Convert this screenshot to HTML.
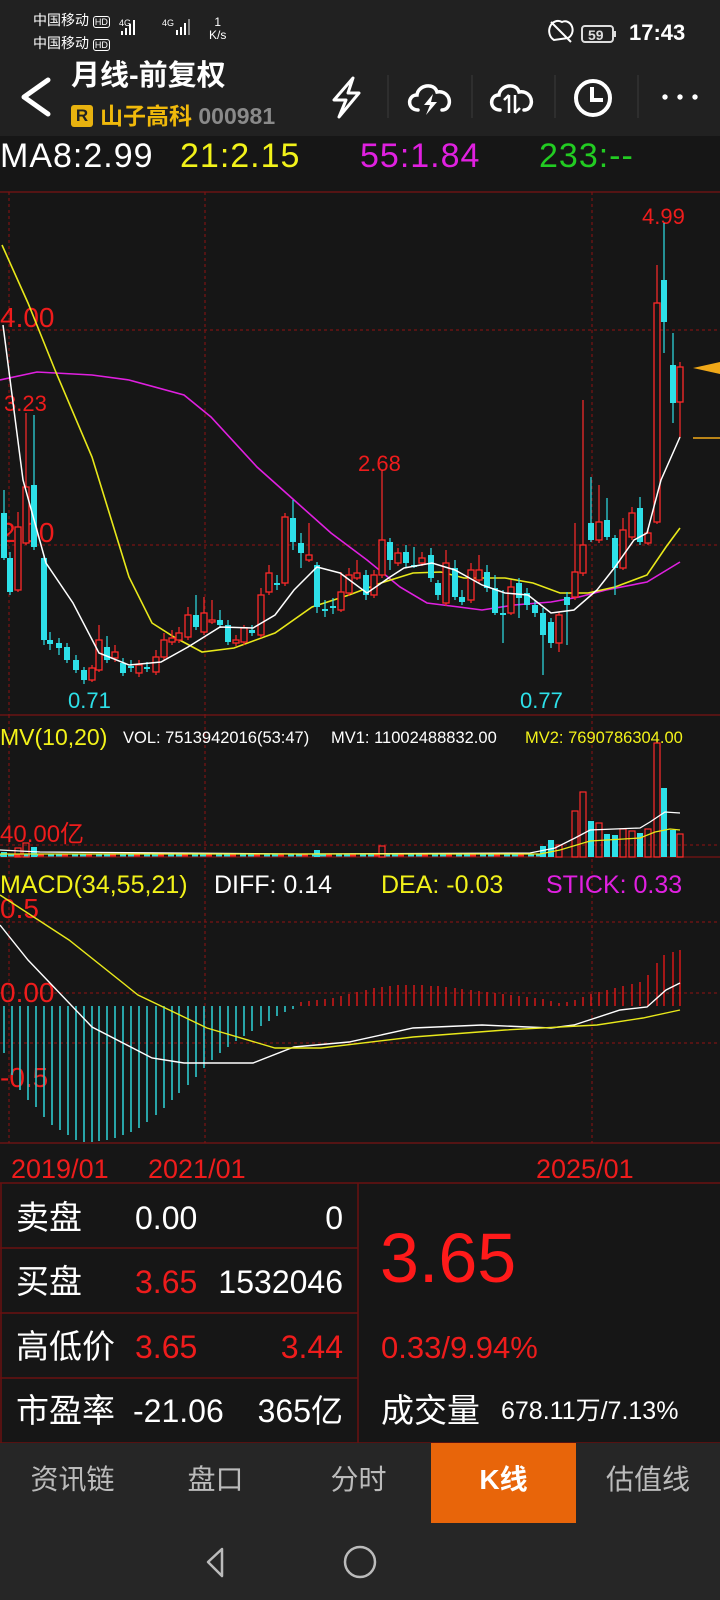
<!DOCTYPE html>
<html><head><meta charset="utf-8"><style>
*{margin:0;padding:0;box-sizing:border-box}
body{width:720px;height:1600px;background:#161616;position:relative;overflow:hidden;font-family:"Liberation Sans","Noto Sans CJK SC",sans-serif;color:#fff}
.a{position:absolute;white-space:nowrap}
</style></head><body>
<div class="a" style="left:0;top:0;width:720px;height:136px;background:#212121"></div>
<div class="a" style="left:33px;top:12px;font-size:14px;line-height:17px">中国移动 <span style="font-size:9px;border:1px solid #fff;border-radius:3px;padding:0 1px">HD</span></div>
<div class="a" style="left:33px;top:35px;font-size:14px;line-height:17px">中国移动 <span style="font-size:9px;border:1px solid #fff;border-radius:3px;padding:0 1px">HD</span></div>
<div class="a" style="left:209px;top:16px;font-size:12px;line-height:13px;text-align:center">1<br>K/s</div>
<div class="a" style="left:629px;top:20px;font-size:22px;font-weight:bold">17:43</div>
<div class="a" style="left:71px;top:58px;font-size:29px;font-weight:bold;line-height:36px">月线-前复权</div>
<div class="a" style="left:71px;top:105px;width:22px;height:22px;background:#e8b20f;border-radius:3px;color:#222;font-size:17px;font-weight:bold;text-align:center;line-height:22px">R</div>
<div class="a" style="left:100px;top:102px;font-size:23px;font-weight:bold;color:#f0b90b;line-height:28px">山子高科 <span style="color:#8a8a8a">000981</span></div>
<div class="a" style="left:0;top:136px;font-size:34px;line-height:40px;letter-spacing:1px">MA8:2.99</div>
<div class="a" style="left:180px;top:136px;font-size:34px;line-height:40px;letter-spacing:1px;color:#f2f21a">21:2.15</div>
<div class="a" style="left:360px;top:136px;font-size:34px;line-height:40px;letter-spacing:1px;color:#e020e0">55:1.84</div>
<div class="a" style="left:539px;top:136px;font-size:34px;line-height:40px;letter-spacing:1px;color:#22cc22">233:--</div>

<svg class="a" style="left:0;top:0" width="720" height="1600" viewBox="0 0 720 1600" font-family="Liberation Sans, sans-serif">
<g fill="#fff"><rect x="121" y="31" width="2" height="4"/><rect x="125" y="28" width="2" height="7"/><rect x="129" y="24" width="2" height="11"/><rect x="133" y="20" width="2" height="15"/>
<rect x="176" y="30" width="2" height="5"/><rect x="180" y="27" width="2" height="8"/><rect x="184" y="23" width="2" height="12"/><rect x="188" y="19" width="2" height="16" fill="#888"/></g>
<text x="119" y="26" font-size="9" fill="#fff">4G</text><text x="162" y="26" font-size="9" fill="#fff">4G</text>
<path d="M554 40 A7 8 0 0 1 562 22 A7 8 0 0 1 568 38 Z M551 22 L571 42" stroke="#fff" stroke-width="2" fill="none"/>
<rect x="582" y="26" width="31" height="16" rx="3" fill="none" stroke="#ddd" stroke-width="2"/><rect x="614" y="31" width="2" height="6" fill="#ddd"/>
<text x="588" y="40" font-size="14" font-weight="bold" fill="#ddd">59</text>
<polyline points="48,80 24,97 48,114" stroke="#fff" stroke-width="5" fill="none" stroke-linecap="round" stroke-linejoin="round"/>
<path d="M353 78 L334 100 L346 100 L339 117 L359 93 L348 93 Z" stroke="#fff" stroke-width="3" fill="none" stroke-linejoin="round"/>
<path d="M418 110 C407 110 407 95 417 95 C418 85 434 82 437 92 C447 90 453 101 447 108 C446 109 444 110 442 110" stroke="#fff" stroke-width="3.5" fill="none" stroke-linecap="round"/>
<path d="M433 94 L424 105 H430 L426 115 L437 102 H431 Z" fill="#fff"/>
<path d="M500 110 C489 110 489 95 499 95 C500 85 516 82 519 92 C529 90 535 101 529 108 C528 109 526 110 524 110" stroke="#fff" stroke-width="3.5" fill="none" stroke-linecap="round"/>
<path d="M509 95 V113 M504 100 L509 95 M515 113 V95 M520 108 L515 113" stroke="#fff" stroke-width="2.5" fill="none"/>
<circle cx="593" cy="98" r="17" stroke="#fff" stroke-width="4" fill="none"/><path d="M592 87 V100 H603" stroke="#fff" stroke-width="4" fill="none"/>
<g fill="#fff"><circle cx="665" cy="97" r="2.7"/><circle cx="680" cy="97" r="2.7"/><circle cx="695" cy="97" r="2.7"/></g>
<g stroke="#3a3a3a" stroke-width="1"><path d="M388 75V118M472 75V118M555 75V118M638 75V118"/></g>

<g stroke="#7a1414" stroke-width="1.2" fill="none">
<path d="M0 192H720M0 715H720M0 857H720M0 1143H720"/>
<path stroke-dasharray="3 3" d="M0 330H720M0 545H720M0 845H720M0 922H720M0 993H720M0 1043H720M9 192V715M205 192V715M592 192V715M9 715V1143M205 715V1143M592 715V1143"/>
</g>
<g fill="#ee1c1c" font-size="28"><text x="0" y="327">4.00</text><text x="0" y="542">2.00</text></g>
<g fill="#ee1c1c" font-size="22"><text x="4" y="411">3.23</text><text x="358" y="471">2.68</text><text x="642" y="224">4.99</text></g>
<g fill="#2de0e8" font-size="22"><text x="68" y="708">0.71</text><text x="520" y="708">0.77</text></g>
<g fill="none" stroke-width="1.6">
<path stroke="#e020e0" d="M0 380 L37 372 L92 375 L129 380 L184 395 L211 417 L257 467 L294 500 L331 533 L367 560 L400 587 L427 603 L459 607 L482 610 L514 605 L551 602 L579 597 L606 590 L647 582 L680 562"/>
<path stroke="#e8e81a" d="M2 245 L28 303 L55 370 L92 457 L129 577 L152 623 L174 637 L202 652 L234 648 L275 633 L312 607 L349 595 L381 583 L413 573 L441 572 L464 578 L505 578 L533 583 L560 593 L588 593 L615 587 L647 575 L666 547 L680 528"/>
</g>
<path stroke="#ff2a2a" stroke-width="1.2" fill="none" d="M18 512V527M18 590V592M26 413V487M26 543V545M92 665V668M92 680V682M99 625V640M99 670V672M115 645V652M115 658V662M139 660V665M139 673V677M156 650V657M156 672V675M164 633V640M164 657V660M172 630V638M172 642V645M179 627V633M179 640V643M188 607V615M188 637V640M204 597V613M204 632V635M212 600V620M212 622V624M236 635V640M236 643V646M244 625V628M244 642V645M261 588V595M261 635V638M269 565V573M269 592V595M285 513V517M285 583V586M309 523V555M309 560V562M341 572V592M341 610V612M349 568V575M349 593V596M357 560V573M357 578V580M374 570V575M374 595V598M382 470V540M382 575V578M398 548V553M398 563V566M422 552V558M422 563V566M446 550V563M446 603V606M471 563V570M471 600V603M479 555V570M479 580V583M511 580V587M511 613V615M559 612V615M559 643V652M575 523V572M575 597V600M583 400V545M583 573V576M599 485V522M599 540V543M623 518V530M623 568V570M632 507V513M632 537V540M648 528V533M648 543V545M657 265V303M657 522V524M680 362V367M680 402V437"/>
<g stroke="#ff2a2a" stroke-width="1.3" fill="#161616">
<rect x="15" y="527" width="6" height="63"/><rect x="23" y="487" width="6" height="56"/><rect x="89" y="668" width="6" height="12"/><rect x="96" y="640" width="6" height="30"/><rect x="112" y="652" width="6" height="6"/><rect x="136" y="665" width="6" height="8"/><rect x="153" y="657" width="6" height="15"/><rect x="161" y="640" width="6" height="17"/><rect x="169" y="638" width="6" height="4"/><rect x="176" y="633" width="6" height="7"/><rect x="185" y="615" width="6" height="22"/><rect x="201" y="613" width="6" height="19"/><rect x="209" y="620" width="6" height="2"/><rect x="233" y="640" width="6" height="3"/><rect x="241" y="628" width="6" height="14"/><rect x="258" y="595" width="6" height="40"/><rect x="266" y="573" width="6" height="19"/><rect x="282" y="517" width="6" height="66"/><rect x="306" y="555" width="6" height="5"/><rect x="338" y="592" width="6" height="18"/><rect x="346" y="575" width="6" height="18"/><rect x="354" y="573" width="6" height="5"/><rect x="371" y="575" width="6" height="20"/><rect x="379" y="540" width="6" height="35"/><rect x="395" y="553" width="6" height="10"/><rect x="419" y="558" width="6" height="5"/><rect x="443" y="563" width="6" height="40"/><rect x="468" y="570" width="6" height="30"/><rect x="476" y="570" width="6" height="10"/><rect x="508" y="587" width="6" height="26"/><rect x="556" y="615" width="6" height="28"/><rect x="572" y="572" width="6" height="25"/><rect x="580" y="545" width="6" height="28"/><rect x="596" y="522" width="6" height="18"/><rect x="620" y="530" width="6" height="38"/><rect x="629" y="513" width="6" height="24"/><rect x="645" y="533" width="6" height="10"/><rect x="654" y="303" width="6" height="219"/><rect x="677" y="367" width="6" height="35"/>
</g>
<path stroke="#2de0e8" stroke-width="1.2" fill="none" d="M4 490V560M10 552V595M34 415V550M44 555V645M50 632V650M59 638V655M67 643V663M76 655V673M84 667V684M107 636V663M123 658V676M131 660V672M147 662V672M196 595V630M220 610V628M228 620V645M252 625V636M277 575V590M293 500V550M301 533V568M317 562V613M325 600V617M333 598V614M366 570V600M390 538V570M406 545V567M414 547V568M431 548V582M438 580V600M455 560V600M462 590V605M487 565V592M495 575V615M503 590V643M519 578V618M527 588V610M535 600V617M543 608V675M551 618V648M567 592V645M591 477V542M607 498V540M615 535V595M640 497V545M664 223V353M673 333V423"/>
<g fill="#2de0e8">
<rect x="1" y="513" width="6" height="45"/><rect x="7" y="558" width="6" height="34"/><rect x="31" y="485" width="6" height="62"/><rect x="41" y="558" width="6" height="82"/><rect x="47" y="640" width="6" height="4"/><rect x="56" y="643" width="6" height="5"/><rect x="64" y="647" width="6" height="13"/><rect x="73" y="660" width="6" height="10"/><rect x="81" y="670" width="6" height="10"/><rect x="104" y="647" width="6" height="13"/><rect x="120" y="663" width="6" height="10"/><rect x="128" y="666" width="6" height="2"/><rect x="144" y="667" width="6" height="2"/><rect x="193" y="615" width="6" height="12"/><rect x="217" y="620" width="6" height="5"/><rect x="225" y="625" width="6" height="17"/><rect x="249" y="630" width="6" height="3"/><rect x="274" y="583" width="6" height="2"/><rect x="290" y="518" width="6" height="24"/><rect x="298" y="543" width="6" height="10"/><rect x="314" y="565" width="6" height="42"/><rect x="322" y="609" width="6" height="2"/><rect x="330" y="606" width="6" height="2"/><rect x="363" y="575" width="6" height="20"/><rect x="387" y="542" width="6" height="18"/><rect x="403" y="552" width="6" height="11"/><rect x="411" y="565" width="6" height="2"/><rect x="428" y="555" width="6" height="23"/><rect x="435" y="583" width="6" height="12"/><rect x="452" y="568" width="6" height="29"/><rect x="459" y="597" width="6" height="5"/><rect x="484" y="572" width="6" height="16"/><rect x="492" y="588" width="6" height="25"/><rect x="500" y="613" width="6" height="2"/><rect x="516" y="583" width="6" height="15"/><rect x="524" y="593" width="6" height="12"/><rect x="532" y="605" width="6" height="8"/><rect x="540" y="613" width="6" height="22"/><rect x="548" y="622" width="6" height="21"/><rect x="564" y="597" width="6" height="8"/><rect x="588" y="523" width="6" height="17"/><rect x="604" y="520" width="6" height="17"/><rect x="612" y="538" width="6" height="30"/><rect x="637" y="508" width="6" height="34"/><rect x="661" y="280" width="6" height="42"/><rect x="670" y="365" width="6" height="38"/>
</g>
<path stroke="#fff" stroke-width="1.5" fill="none" d="M3 325 L23 480 L46 563 L73 603 L99 653 L129 665 L161 662 L188 647 L220 627 L253 628 L275 615 L294 590 L317 567 L340 573 L367 593 L390 577 L404 568 L432 563 L455 570 L482 585 L505 593 L528 595 L551 613 L574 610 L597 590 L615 567 L634 540 L647 533 L661 480 L680 437"/>
<path d="M693 368 L720 362 L720 374 Z" fill="#f0a818"/><path d="M693 438H720" stroke="#f0a818" stroke-width="1.5"/>

<text x="0" y="745" font-size="23" fill="#f2f21a">MV(10,20)</text>
<text x="123" y="743" font-size="16.5" fill="#fff">VOL: 7513942016(53:47)</text>
<text x="331" y="743" font-size="16.5" fill="#fff">MV1: 11002488832.00</text>
<text x="525" y="743" font-size="16.5" fill="#f2f21a">MV2: 7690786304.00</text>
<text x="0" y="842" font-size="24" fill="#ee1c1c">40.00亿</text>
<path d="M0 855H540" stroke="#2de0e8" stroke-width="3" stroke-dasharray="6 2 6 10"/>
<path d="M0 855H540" stroke="#ff2a2a" stroke-width="3" stroke-dasharray="0 14 6 4"/>
<g fill="#2de0e8"><rect x="1" y="852" width="6" height="5"/><rect x="31" y="847" width="6" height="10"/><rect x="314" y="850" width="6" height="7"/><rect x="540" y="846" width="6" height="11"/><rect x="548" y="840" width="6" height="17"/><rect x="588" y="821" width="6" height="36"/><rect x="604" y="834" width="6" height="23"/><rect x="612" y="835" width="6" height="22"/><rect x="637" y="833" width="6" height="24"/><rect x="661" y="788" width="6" height="69"/><rect x="670" y="830" width="6" height="27"/></g>
<g fill="none" stroke="#ff2a2a" stroke-width="1.2"><rect x="15" y="848" width="6" height="9"/><rect x="23" y="843" width="6" height="14"/><rect x="379" y="846" width="6" height="11"/><rect x="556" y="845" width="6" height="12"/><rect x="572" y="811" width="6" height="46"/><rect x="580" y="792" width="6" height="65"/><rect x="596" y="823" width="6" height="34"/><rect x="620" y="829" width="6" height="28"/><rect x="629" y="831" width="6" height="26"/><rect x="645" y="829" width="6" height="28"/><rect x="654" y="743" width="6" height="114"/><rect x="677" y="834" width="6" height="23"/></g>
<path fill="none" stroke="#fff" stroke-width="1.3" d="M0 850 L40 852 L300 854 L530 853 L555 848 L575 838 L590 830 L640 828 L650 822 L665 812 L680 813"/>
<path fill="none" stroke="#e8e81a" stroke-width="1.3" d="M0 854 L540 854 L560 850 L590 841 L640 838 L655 832 L670 829 L680 830"/>

<text x="0" y="893" font-size="25" fill="#f2f21a">MACD(34,55,21)</text>
<text x="214" y="893" font-size="25" fill="#fff">DIFF: 0.14</text>
<text x="381" y="893" font-size="25" fill="#f2f21a">DEA: -0.03</text>
<text x="546" y="893" font-size="25" fill="#e020e0">STICK: 0.33</text>
<g fill="#ee1c1c" font-size="28"><text x="0" y="918">0.5</text><text x="0" y="1002">0.00</text><text x="0" y="1087">-0.5</text></g>
<path stroke="#2ec8cc" stroke-width="1.6" d="M4 1006V1053M12 1006V1075M20 1006V1090M28 1006V1100M36 1006V1107M44 1006V1117M52 1006V1125M60 1006V1130M68 1006V1135M76 1006V1140M84 1006V1142M92 1006V1142M99 1006V1141M107 1006V1140M115 1006V1138M123 1006V1135M131 1006V1132M139 1006V1128M147 1006V1122M156 1006V1115M164 1006V1108M172 1006V1100M179 1006V1093M188 1006V1085M196 1006V1077M204 1006V1068M212 1006V1060M220 1006V1053M228 1006V1047M236 1006V1041M244 1006V1036M252 1006V1031M261 1006V1026M269 1006V1021M277 1006V1016M285 1006V1012M293 1006V1009"/>
<path stroke="#e01818" stroke-width="1.4" d="M301 1006V1002M309 1006V1001M317 1006V1000M325 1006V999M333 1006V998M341 1006V996M349 1006V994M357 1006V992M366 1006V990M374 1006V988M382 1006V987M390 1006V986M398 1006V985M406 1006V985M414 1006V985M422 1006V985M431 1006V986M438 1006V986M446 1006V987M455 1006V988M462 1006V989M471 1006V990M479 1006V991M487 1006V992M495 1006V993M503 1006V994M511 1006V995M519 1006V996M527 1006V997M535 1006V998M543 1006V999M551 1006V1001M559 1006V1003M567 1006V1002M575 1006V1000M583 1006V997M591 1006V994M599 1006V992M607 1006V990M615 1006V988M623 1006V986M632 1006V984M640 1006V982M648 1006V975M657 1006V963M664 1006V955M673 1006V952M680 1006V950"/>
<path fill="none" stroke="#fff" stroke-width="1.4" d="M0 925 L28 960 L92 1027 L152 1058 L184 1063 L253 1063 L294 1047 L349 1042 L413 1028 L482 1025 L551 1028 L574 1025 L620 1010 L647 1007 L666 990 L680 983"/>
<path fill="none" stroke="#e8e81a" stroke-width="1.4" d="M0 895 L69 940 L138 995 L207 1028 L275 1048 L321 1048 L413 1037 L505 1030 L597 1025 L643 1018 L680 1010"/>
<g fill="#ee1c1c" font-size="27"><text x="11" y="1178">2019/01</text><text x="148" y="1178">2021/01</text><text x="536" y="1178">2025/01</text></g>
<g stroke="#6a1010" stroke-width="1.5" fill="none"><path d="M0 1183H720M0 1248H358M0 1313H358M0 1378H358M0 1443H720M358 1183V1443M1 1183V1443"/></g>
<rect x="0" y="1443" width="720" height="157" fill="#262626"/>
<rect x="431" y="1443" width="145" height="80" fill="#e8650a"/>
<path d="M222 1549 L208 1562 L222 1576 Z" fill="none" stroke="#bbb" stroke-width="2.5" stroke-linejoin="round"/>
<circle cx="360" cy="1562" r="15" fill="none" stroke="#bbb" stroke-width="2.5"/>
</svg>

<div class="a" style="left:16px;top:1198px;font-size:33px;line-height:40px">卖盘</div>
<div class="a" style="left:135px;top:1198px;font-size:32px;line-height:40px">0.00</div>
<div class="a" style="right:377px;top:1198px;font-size:32px;line-height:40px">0</div>
<div class="a" style="left:16px;top:1262px;font-size:33px;line-height:40px">买盘</div>
<div class="a" style="left:135px;top:1262px;font-size:32px;line-height:40px;color:#ee1c1c">3.65</div>
<div class="a" style="right:377px;top:1262px;font-size:32px;line-height:40px">1532046</div>
<div class="a" style="left:16px;top:1327px;font-size:33px;line-height:40px">高低价</div>
<div class="a" style="left:135px;top:1327px;font-size:32px;line-height:40px;color:#ee1c1c">3.65</div>
<div class="a" style="right:377px;top:1327px;font-size:32px;line-height:40px;color:#ee1c1c">3.44</div>
<div class="a" style="left:16px;top:1391px;font-size:33px;line-height:40px">市盈率</div>
<div class="a" style="left:133px;top:1391px;font-size:32px;line-height:40px">-21.06</div>
<div class="a" style="right:377px;top:1391px;font-size:32px;line-height:40px">365亿</div>
<div class="a" style="left:380px;top:1218px;font-size:70px;line-height:80px;color:#ff1a1a">3.65</div>
<div class="a" style="left:381px;top:1328px;font-size:31px;line-height:40px;color:#ee1c1c">0.33/9.94%</div>
<div class="a" style="left:381px;top:1391px;font-size:33px;line-height:40px">成交量</div>
<div class="a" style="left:501px;top:1395px;font-size:25px;line-height:32px">678.11万/7.13%</div>
<div class="a" style="left:0;top:1462px;width:145px;text-align:center;font-size:28px;line-height:36px;color:#bbb">资讯链</div>
<div class="a" style="left:143px;top:1462px;width:145px;text-align:center;font-size:28px;line-height:36px;color:#bbb">盘口</div>
<div class="a" style="left:286px;top:1462px;width:145px;text-align:center;font-size:28px;line-height:36px;color:#bbb">分时</div>
<div class="a" style="left:431px;top:1462px;width:145px;text-align:center;font-size:28px;line-height:36px;color:#fff;font-weight:bold">K线</div>
<div class="a" style="left:576px;top:1462px;width:144px;text-align:center;font-size:28px;line-height:36px;color:#bbb">估值线</div>
</body></html>
